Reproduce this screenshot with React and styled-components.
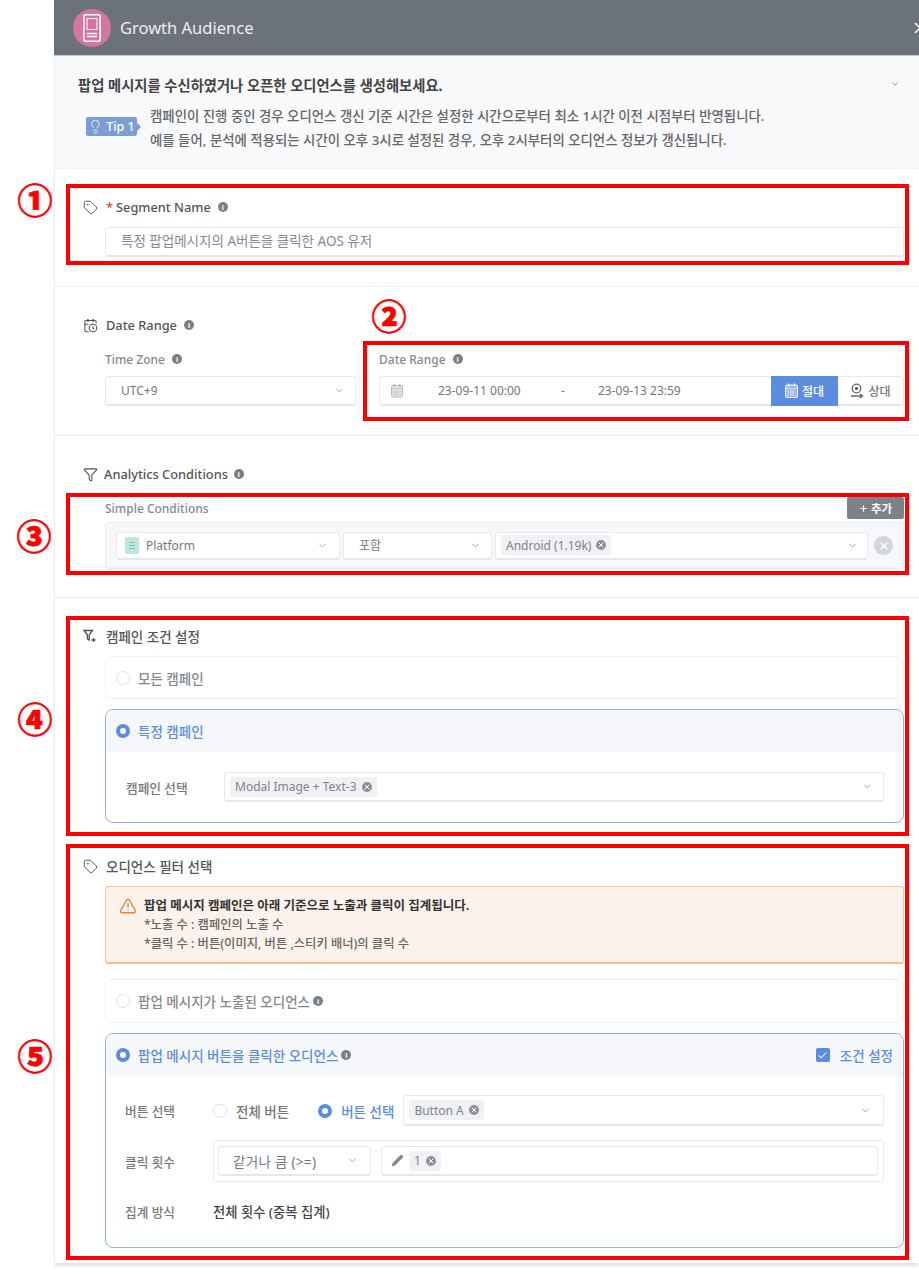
import React from "react";
import styled, { createGlobalStyle } from "styled-components";
import { Tag, CalendarClock, Filter, ChevronDown, X, Lightbulb, Pencil, TriangleAlert, Check, Plus } from "lucide-react";

const Global = createGlobalStyle`
  html, body { margin: 0; padding: 0; background: #fff; overflow-x: hidden; }
  body { font-family: "Noto Sans", "Noto Sans CJK KR", sans-serif; color: #666; }
  * { box-sizing: border-box; }
`;

const Page = styled.div`position: relative; width: 919px; height: 1275px; overflow: hidden; background: #fff;`;
const Panel = styled.div`
  margin-left: 54px; width: 865px; border-left: 1px solid #eeeff2; background: #fff;
  box-shadow: 0 4px 3px -1px #e2e2e4;
`;
const Header = styled.header`
  height: 56px; margin-left: -1px; background: #6c7279; border-bottom: 1px solid #c6cad0; display: flex; align-items: center;
  padding-left: 19px; gap: 9px; overflow: hidden;
`;
const HeaderTitle = styled.h1`margin: 0; flex: 1; font-size: 16.5px; font-weight: 400; color: #eceef0;`;
const CloseIcon = styled(X)`margin-right: -10px; color: #fff; flex: none;`;

const Intro = styled.div`
  background: #f8f9fb; border-bottom: 1px solid #eeeff2; height: 113px; padding: 18px 19px 0 23px;
`;
const IntroTop = styled.div`display: flex; align-items: center; justify-content: space-between; height: 20px;`;
const IntroTitle = styled.div`font-size: 14.3px; font-weight: 700; color: #444;`;
const TipRow = styled.div`display: flex; align-items: center; margin: 10px 0 0 8px;`;
const TipBadge = styled.div`
  position: relative; width: 51px; height: 19px; margin: -4px 13px 0 0; border-radius: 2px; background: #7b9dd4; color: #fff;
  display: flex; align-items: center; justify-content: center; gap: 3px; font-size: 12.5px; font-weight: 500; flex: none;
  &::after { content: ""; position: absolute; left: 100%; top: 6px; border: 4px solid transparent; border-left-color: #7b9dd4; }
`;
const TipLines = styled.div`font-size: 13.4px; font-weight: 500; line-height: 24px; color: #666;`;

const Section = styled.section`
  padding: 28px 15px ${p => p.$bottom ?? 28}px 28px;
  ${p => p.$noBorder ? "" : "border-bottom: 1px solid #eeeff2;"}
`;
const TitleRow = styled.div`
  display: flex; align-items: center; height: 20px; margin-bottom: ${p => p.$mb ?? 10}px;
  font-size: ${p => p.$size ?? 12.8}px; font-weight: 500; color: #555; gap: ${p => p.$gap ?? 8}px;
  svg.lead { color: #4f4f4f; flex: none; }
`;
const Req = styled.span`color: #e0443c; margin-right: 3px;`;
const Info = styled.span`
  display: inline-flex; align-items: center; justify-content: center; width: 10px; height: 10px; border-radius: 50%;
  background: #7a7f85; color: #fff; font-size: 7px; font-weight: 700; line-height: 1; margin-left: ${p => p.$ml ?? 7}px; flex: none;
`;
const Indent = styled.div`margin-left: 22px;`;
const Control = styled.div`
  display: flex; align-items: center; height: ${p => p.$h ?? 30}px; background: #fff; border: 1px solid #e8e9ef; border-bottom: 2px solid #e6e7ee;
  border-radius: 3px; font-size: ${p => p.$fs ?? 12}px; letter-spacing: ${p => p.$ls ?? 0}px; color: #777; padding: ${p => p.$pad ?? "0 15px"}; flex: ${p => p.$flex ?? "none"};
  ${p => p.$w ? `width: ${p.$w}px;` : ""}
`;
const Placeholder = styled.span`color: #8a8a8a; font-size: 13.5px; margin-top: -3px;`;
const Caret = styled(ChevronDown)`margin-left: auto; color: #9a9ea5; flex: none;`;
const DateFields = styled.div`display: grid; grid-template-columns: 251px 525px; column-gap: 23px;`;
const FieldLabel = styled.div`
  display: flex; align-items: center; height: 18px; margin-bottom: ${p => p.$mb ?? 8}px; font-size: 12px; font-weight: 500; color: #85888d;
`;
const DateValue = styled.span`width: ${p => p.$w}px; margin-left: ${p => p.$ml ?? 0}px; font-size: 12px; color: #777; flex: none;`;
const ModeButton = styled.div`
  width: ${p => p.$w}px; height: 30px; margin: -1px 0 -1px; display: flex; align-items: center; justify-content: center; gap: 4px; font-size: 12px; font-weight: 500; flex: none;
  background: ${p => p.$on ? "#5b8ddf" : "transparent"}; color: ${p => p.$on ? "#fff" : "#777"};
`;
const CondHead = styled.div`display: flex; align-items: center; justify-content: space-between; height: 22px; margin-bottom: 3px;`;
const AddButton = styled.div`
  width: 57px; height: 22px; background: #7c8288; border-radius: 2px; color: #fff; font-size: 11.5px; font-weight: 700;
  display: flex; align-items: center; justify-content: center; gap: 3px;
`;
const CondBox = styled.div`
  height: 47px; background: #f7f8fa; border: 1px solid #eaebef; border-radius: 3px; display: flex; align-items: center;
  padding: 0 10px; gap: 3px;
`;
const PlatformDot = styled.span`
  width: 14px; height: 17px; border-radius: 2px; background: #bfe6dc; margin-right: 7px; flex: none; display: flex; flex-direction: column; justify-content: center; align-items: center; gap: 2px;
  i { display: block; width: 6px; height: 1px; background: #7ec2b0; }
`;
const Chip = styled.span`
  display: inline-flex; align-items: center; height: 20px; background: #f0f1f5; border-radius: 3px; padding: 0 5px; gap: 5px; font-size: 12px; color: #808388; flex: none;
`;
const ChipX = styled.span`
  width: 10px; height: 10px; border-radius: 50%; background: #8d9197; color: #fff; display: inline-flex; align-items: center; justify-content: center; flex: none;
`;
const RemoveCircle = styled.span`
  width: 19px; height: 19px; border-radius: 50%; background: #d3d6dc; color: #fff; display: flex; align-items: center; justify-content: center; margin-left: 3px; flex: none;
`;
const Card = styled.div`
  border: 1px solid ${p => p.$on ? "#8fb0e6" : "#f0f1f4"}; border-radius: 8px; background: #fff; margin-bottom: ${p => p.$mb ?? 10}px; overflow: hidden;
`;
const CardHead = styled.div`
  display: flex; align-items: center; height: ${p => p.$h ?? 42}px; padding: 0 10px; gap: 8px; font-size: 13.5px; font-weight: 500;
  color: ${p => p.$on ? "#5b8ddf" : "#85888d"}; background: ${p => p.$on ? "#f6f7fa" : "#fff"};
`;
const Radio = styled.span`
  width: 14px; height: 14px; border-radius: 50%; flex: none;
  ${p => p.$on ? "background: #fff; border: 4px solid #5b8ddf;" : "background: #fff; border: 1px solid #dfe1e8;"}
`;
const CardBody = styled.div`padding: ${p => p.$pad};`;
const FormRow = styled.div`display: flex; align-items: center; margin-bottom: ${p => p.$mb ?? 0}px;`;
const FormLabel = styled.div`width: ${p => p.$w ?? 88}px; flex: none; font-size: 12.7px; font-weight: 500; color: #777;`;
const RadioText = styled.span`font-size: 13.5px; font-weight: 500; color: ${p => p.$on ? "#5b8ddf" : "#777"}; margin: 0 ${p => p.$mr ?? 0}px 0 9px; flex: none;`;
const Warn = styled.div`
  height: 78px; background: #fbf2ec; border: 1px solid #eec7a2; border-bottom: 2px solid #ecbf95; border-radius: 3px; display: flex; padding: 10px 13px; margin-bottom: 15px; gap: 7px;
`;
const WarnText = styled.div`font-size: 12.3px; line-height: 19px; color: #666; font-weight: 500; margin-top: -1px;`;
const WarnTitle = styled.div`font-weight: 700; color: #333; font-size: 12.5px;`;
const CheckBox = styled.span`
  width: 14px; height: 14px; background: #5b8ddf; border-radius: 2px; display: inline-flex; align-items: center; justify-content: center; color: #fff; margin-left: auto; margin-right: 2px; flex: none;
`;
const CountBox = styled.div`
  flex: 1; height: 42px; border: 1px solid #e9eaef; border-radius: 3px; display: flex; align-items: center; padding: 0 5px 0 4px; gap: 10px;
`;
const Strong = styled.span`font-size: 13.3px; font-weight: 500; color: #444;`;
const PencilIcon = styled(Pencil)`margin-right: 5px; flex: none; color: #888;`;

const Annot = styled.div`
  position: absolute; left: ${p => p.$x}px; top: ${p => p.$y}px; width: ${p => p.$w}px; height: ${p => p.$h}px; border: 4px solid #f00; pointer-events: none;
`;
const Num = styled.div`
  position: absolute; left: ${p => p.$x - 20}px; top: ${p => p.$y - 23}px; width: 40px; height: 40px; color: #f00;
  display: flex; align-items: center; justify-content: center; font-size: 35px; font-weight: 900; line-height: 1;
  font-family: "Noto Sans CJK KR", sans-serif; -webkit-text-stroke: 0.7px #f00;
`;

const InfoDot = ({ ml }) => <Info $ml={ml}>i</Info>;
const Small = () => <ChipX><X size={8} strokeWidth={3} /></ChipX>;

const Logo = () => (
  <svg width="38" height="38" viewBox="0 0 38 38">
    <circle cx="19" cy="19" r="19" fill="#d6759f" />
    <rect x="10.8" y="5.8" width="16.4" height="26.4" rx="2" fill="none" stroke="#fff" strokeWidth="1.6" />
    <rect x="14" y="9.5" width="10" height="11" fill="none" stroke="#fff" strokeWidth="1" />
    <path d="M14 24.5h10M14 27.5h10" stroke="#fff" strokeWidth="1.4" />
  </svg>
);
const FunnelPlusIcon = () => (
  <svg className="lead" width="15" height="14" viewBox="0 0 15 14" fill="none" stroke="currentColor" strokeWidth="1.3">
    <path d="M1 1.5h8.5L6.2 6v5L4.4 9.8V6z" />
    <path d="M10.5 9v4M8.5 11h4" />
  </svg>
);
const RelativeIcon = () => (
  <svg width="14" height="16" viewBox="0 0 14 16" fill="none" stroke="#666" strokeWidth="1.3">
    <circle cx="6.5" cy="5.5" r="4.3" />
    <circle cx="6.5" cy="5.5" r="1" fill="#666" />
    <path d="M1 13h11M10 11l2.5 2-2.5 2" />
  </svg>
);
const CalendarGlyph = ({ color }) => (
  <svg width="13" height="15" viewBox="0 0 13 15" fill="none">
    <path d="M3.5 .5v3M9.5 .5v3" stroke={color} strokeWidth="1.4" />
    <rect x=".5" y="2" width="12" height="12.5" rx="1.5" fill={color} fillOpacity=".35" stroke={color} />
    <path d="M1 5.5h11M2.5 8h8M2.5 10h8M2.5 12h8" stroke={color} strokeDasharray="1.5 1" />
  </svg>
);

export default function App() {
  return (
    <Page>
      <Global />
      <Panel>
        <Header>
          <Logo />
          <HeaderTitle>Growth Audience</HeaderTitle>
          <CloseIcon size={18} />
        </Header>
        <Intro>
          <IntroTop>
            <IntroTitle>팝업 메시지를 수신하였거나 오픈한 오디언스를 생성해보세요.</IntroTitle>
            <ChevronDown size={10} color="#777" />
          </IntroTop>
          <TipRow>
            <TipBadge><Lightbulb size={15} strokeWidth={1.3} />Tip 1</TipBadge>
            <TipLines>
              <div>캠페인이 진행 중인 경우 오디언스 갱신 기준 시간은 설정한 시간으로부터 최소 1시간 이전 시점부터 반영됩니다.</div>
              <div>예를 들어, 분석에 적용되는 시간이 오후 3시로 설정된 경우, 오후 2시부터의 오디언스 정보가 갱신됩니다.</div>
            </TipLines>
          </TipRow>
        </Intro>

        <Section $bottom={29}>
          <TitleRow>
            <Tag className="lead" size={15} strokeWidth={1.5} />
            <span><Req>*</Req>Segment Name</span>
            <InfoDot ml={-1} />
          </TitleRow>
          <Indent>
            <Control><Placeholder>특정 팝업메시지의 A버튼을 클릭한 AOS 유저</Placeholder></Control>
          </Indent>
        </Section>

        <Section $bottom={29}>
          <TitleRow $mb={15}>
            <CalendarClock className="lead" size={15} strokeWidth={1.7} />
            <span>Date Range</span>
            <InfoDot ml={-1} />
          </TitleRow>
          <Indent>
            <DateFields>
              <div>
                <FieldLabel>Time Zone<InfoDot /></FieldLabel>
                <Control $pad="0 10px 0 15px">UTC+9<Caret size={11} /></Control>
              </div>
              <div>
                <FieldLabel>Date Range<InfoDot /></FieldLabel>
                <Control $pad="0 0 0 11px">
                  <CalendarGlyph color="#b0b4bb" />
                  <DateValue $w={123} $ml={35}>23-09-11 00:00</DateValue>
                  <DateValue $w={37}>-</DateValue>
                  <DateValue $w={173}>23-09-13 23:59</DateValue>
                  <ModeButton $on $w={67}><CalendarGlyph color="#ffffff" />절대</ModeButton>
                  <ModeButton $w={65}><RelativeIcon />상대</ModeButton>
                </Control>
              </div>
            </DateFields>
          </Indent>
        </Section>

        <Section>
          <TitleRow $mb={13} $gap={6}>
            <Filter className="lead" size={15} strokeWidth={1.7} />
            <span>Analytics Conditions</span>
            <InfoDot ml={0} />
          </TitleRow>
          <Indent>
            <CondHead>
              <FieldLabel $mb={0}>Simple Conditions</FieldLabel>
              <AddButton><Plus size={9} strokeWidth={3} />추가</AddButton>
            </CondHead>
            <CondBox>
              <Control $w={224} $h={28} $pad="0 11px 0 8px">
                <PlatformDot><i /><i /><i /></PlatformDot>Platform<Caret size={11} />
              </Control>
              <Control $w={149} $h={28} $pad="0 10px 0 15px">포함<Caret size={11} /></Control>
              <Control $flex="1" $h={28} $pad="0 9px 0 5px">
                <Chip>Android (1.19k)<Small /></Chip>
                <Caret size={11} />
              </Control>
              <RemoveCircle><X size={12} strokeWidth={2.5} /></RemoveCircle>
            </CondBox>
          </Indent>
        </Section>

        <Section $noBorder $bottom={15}>
          <TitleRow $size={13.5}>
            <FunnelPlusIcon />
            <span>캠페인 조건 설정</span>
          </TitleRow>
          <Indent>
            <Card>
              <CardHead $h={41}><Radio />모든 캠페인</CardHead>
            </Card>
            <Card $on $mb={33}>
              <CardHead $on><Radio $on />특정 캠페인</CardHead>
              <CardBody $pad="20px 19px 20px 20px">
                <FormRow>
                  <FormLabel $w={98}>캠페인 선택</FormLabel>
                  <Control $flex="1" $h={30} $pad="0 10px 0 5px">
                    <Chip>Modal Image + Text-3<Small /></Chip>
                    <Caret size={11} />
                  </Control>
                </FormRow>
              </CardBody>
            </Card>
          </Indent>
          <TitleRow $size={13.5}>
            <Tag className="lead" size={15} strokeWidth={1.5} />
            <span>오디언스 필터 선택</span>
          </TitleRow>
          <Indent>
            <Warn>
              <TriangleAlert size={18} color="#dd8a45" strokeWidth={2} />
              <WarnText>
                <WarnTitle>팝업 메시지 캠페인은 아래 기준으로 노출과 클릭이 집계됩니다.</WarnTitle>
                <div>*노출 수 : 캠페인의 노출 수</div>
                <div>*클릭 수 : 버튼(이미지, 버튼 ,스티키 배너)의 클릭 수</div>
              </WarnText>
            </Warn>
            <Card>
              <CardHead $h={42}><Radio />팝업 메시지가 노출된 오디언스<InfoDot ml={-5} /></CardHead>
            </Card>
            <Card $on $mb={0}>
              <CardHead $on $h={42}>
                <Radio $on />팝업 메시지 버튼을 클릭한 오디언스<InfoDot ml={-5} />
                <CheckBox><Check size={11} strokeWidth={2.2} /></CheckBox>
                <span>조건 설정</span>
              </CardHead>
              <CardBody $pad="19px 19px 26px 19px">
                <FormRow $mb={14}>
                  <FormLabel>버튼 선택</FormLabel>
                  <Radio />
                  <RadioText $mr={29}>전체 버튼</RadioText>
                  <Radio $on />
                  <RadioText $on $mr={9}>버튼 선택</RadioText>
                  <Control $flex="1" $h={31} $pad="0 12px 0 5px">
                    <Chip>Button A<Small /></Chip>
                    <Caret size={11} />
                  </Control>
                </FormRow>
                <FormRow $mb={20}>
                  <FormLabel>클릭 횟수</FormLabel>
                  <CountBox>
                    <Control $w={153} $fs={13.5} $ls={0.3} $pad="0 12px 0 14px">같거나 큼 (&gt;=)<Caret size={11} /></Control>
                    <Control $flex="1" $pad="0 5px 0 9px">
                      <PencilIcon size={13} fill="#888" strokeWidth={1} />
                      <Chip>1<Small /></Chip>
                    </Control>
                  </CountBox>
                </FormRow>
                <FormRow>
                  <FormLabel>집계 방식</FormLabel>
                  <Strong>전체 횟수 (중복 집계)</Strong>
                </FormRow>
              </CardBody>
            </Card>
          </Indent>
        </Section>
      </Panel>

      <Annot $x={66} $y={184} $w={843} $h={81} />
      <Annot $x={363} $y={341} $w={546} $h={80} />
      <Annot $x={66} $y={493} $w={843} $h={82} />
      <Annot $x={66} $y={616} $w={843} $h={220} />
      <Annot $x={66} $y={844} $w={843} $h={416} />
      <Num $x={35} $y={201}>①</Num>
      <Num $x={389} $y={317}>②</Num>
      <Num $x={34} $y={537}>③</Num>
      <Num $x={35} $y={720}>④</Num>
      <Num $x={35} $y={1057}>⑤</Num>
    </Page>
  );
}
